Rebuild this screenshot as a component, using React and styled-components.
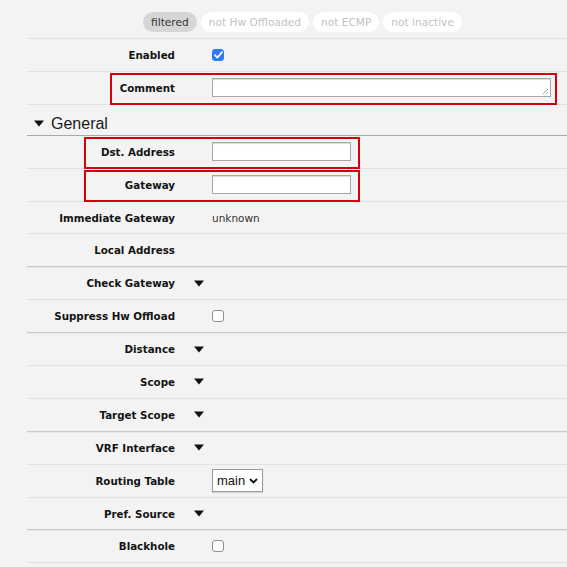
import React from "react";
import styled, { createGlobalStyle } from "styled-components";

const GlobalStyle = createGlobalStyle`
  html, body {
    margin: 0;
    padding: 0;
    background: #f3f3f3;
  }
  body {
    font-family: "DejaVu Sans", Verdana, sans-serif;
    color: #222;
  }
`;

const Page = styled.div`
  width: 567px;
  height: 567px;
  overflow: hidden;
  background: #f3f3f3;
`;

const Filters = styled.div`
  display: flex;
  justify-content: center;
  gap: 4px;
  height: 39px;
  padding: 12px 0 0 11px;
  box-sizing: border-box;
  margin-left: 27px;
  border-bottom: 1px solid #e2e2e2;
`;

const Pill = styled.div`
  height: 20px;
  padding: 0 8px;
  border-radius: 10px;
  display: flex;
  align-items: center;
  font-size: 10.6px;
  font-family: "DejaVu Sans", Verdana, sans-serif;
  background: ${(props) => (props.active ? "#d6d6d6" : "#ffffff")};
  color: ${(props) => (props.active ? "#333" : "#c2c2c2")};
`;

const Row = styled.div`
  position: relative;
  margin-left: 27px;
  height: 31.9px;
  display: grid;
  grid-template-columns: 148px 1fr;
  column-gap: 37px;
  align-items: center;
  border-bottom: ${(props) =>
    props.group ? "1px solid #c9c9c9" : "1px solid #e2e2e2"};
  box-shadow: ${(props) => (props.group ? "0 1px 0 #e8e8e8" : "none")};

  &::after {
    content: "";
    display: ${(props) => (props.mark ? "block" : "none")};
    position: absolute;
    left: ${(props) => props.markLeft || 0}px;
    width: ${(props) => props.markWidth || 0}px;
    top: 1px;
    bottom: -1px;
    border: 2px solid #d6000f;
    box-sizing: border-box;
    pointer-events: none;
  }
`;

const Label = styled.div`
  text-align: right;
  font-weight: bold;
  font-size: 10.3px;
  color: #141414;
  white-space: nowrap;
`;

const Value = styled.div`
  display: flex;
  align-items: center;
  font-size: 10.5px;
  color: #333;
  padding-right: 17px;
`;

const Section = styled.div`
  margin-left: 27px;
  height: 31px;
  box-sizing: border-box;
  padding: 8px 0 0 7px;
  display: flex;
  align-items: center;
  gap: 7px;
  border-bottom: 1px solid #a9a9a9;
  font-family: "Liberation Sans", Arial, sans-serif;
  font-size: 16px;
  color: #1a1a1a;
`;

const TextInput = styled.div`
  width: ${(props) => props.width}px;
  height: ${(props) => props.height || 19}px;
  background: #fff;
  border: 1px solid #a8a8a8;
  box-shadow: inset 0 1px 1px rgba(0, 0, 0, 0.15);
  box-sizing: border-box;
  position: relative;
`;

const Grip = styled.svg`
  position: absolute;
  right: 1px;
  bottom: 1px;
`;

const Check = styled.div`
  width: 12px;
  height: 12px;
  border-radius: 3px;
  box-sizing: border-box;
  display: flex;
  align-items: center;
  justify-content: center;
  background: ${(props) => (props.checked ? "#2b7bf3" : "#fff")};
  border: 1px solid ${(props) => (props.checked ? "#2b7bf3" : "#8e8e8e")};
`;

const Select = styled.div`
  height: 21px;
  padding: 0 4px 0 4px;
  display: flex;
  align-items: center;
  gap: 4px;
  background: #fff;
  border: 1px solid #9a9a9a;
  box-shadow: 0 1px 1px rgba(0, 0, 0, 0.12);
  font-family: "Liberation Sans", Arial, sans-serif;
  font-size: 13px;
  color: #111;
`;

const Toggle = styled.svg`
  margin-left: ${(props) => props.shift || 0}px;
`;

const Caret = ({ shift }) => (
  <Toggle shift={shift} width="10" height="7" viewBox="0 0 10 7">
    <path d="M0 0.5 H10 L5 6.5 Z" fill="#111" />
  </Toggle>
);

const Tick = () => (
  <svg width="9" height="8" viewBox="0 0 9 8">
    <path
      d="M1 4.2 L3.4 6.6 L8 1.2"
      stroke="#fff"
      strokeWidth="1.8"
      fill="none"
      strokeLinecap="round"
      strokeLinejoin="round"
    />
  </svg>
);

const Chevron = () => (
  <svg width="9" height="6" viewBox="0 0 9 6">
    <path
      d="M1 1 L4.5 4.5 L8 1"
      stroke="#111"
      strokeWidth="1.8"
      fill="none"
    />
  </svg>
);

const Field = ({ label, children, ...rest }) => (
  <Row {...rest}>
    <Label>{label}</Label>
    <Value>{children}</Value>
  </Row>
);

export default function App() {
  return (
    <Page>
      <GlobalStyle />
      <Filters>
        <Pill active>filtered</Pill>
        <Pill>not Hw Offloaded</Pill>
        <Pill>not ECMP</Pill>
        <Pill>not inactive</Pill>
      </Filters>

      <Field label="Enabled">
        <Check checked>
          <Tick />
        </Check>
      </Field>
      <Field label="Comment" mark markLeft={83} markWidth={447}>
        <TextInput width={339} height={19}>
          <Grip width="7" height="7" viewBox="0 0 7 7">
            <path d="M6 1 L1 6 M6 4 L4 6" stroke="#888" strokeWidth="0.8" />
          </Grip>
        </TextInput>
      </Field>

      <Section>
        <Caret />
        General
      </Section>

      <Field label="Dst. Address" mark markLeft={57} markWidth={276}>
        <TextInput width={139} />
      </Field>
      <Field label="Gateway" mark markLeft={57} markWidth={276}>
        <TextInput width={139} />
      </Field>
      <Field label="Immediate Gateway">unknown</Field>
      <Field label="Local Address" group />
      <Field label="Check Gateway">
        <Caret shift={-18} />
      </Field>
      <Field label="Suppress Hw Offload" group>
        <Check />
      </Field>
      <Field label="Distance">
        <Caret shift={-18} />
      </Field>
      <Field label="Scope">
        <Caret shift={-18} />
      </Field>
      <Field label="Target Scope" group>
        <Caret shift={-18} />
      </Field>
      <Field label="VRF Interface">
        <Caret shift={-18} />
      </Field>
      <Field label="Routing Table">
        <Select>
          main
          <Chevron />
        </Select>
      </Field>
      <Field label="Pref. Source" group>
        <Caret shift={-18} />
      </Field>
      <Field label="Blackhole">
        <Check />
      </Field>
    </Page>
  );
}
